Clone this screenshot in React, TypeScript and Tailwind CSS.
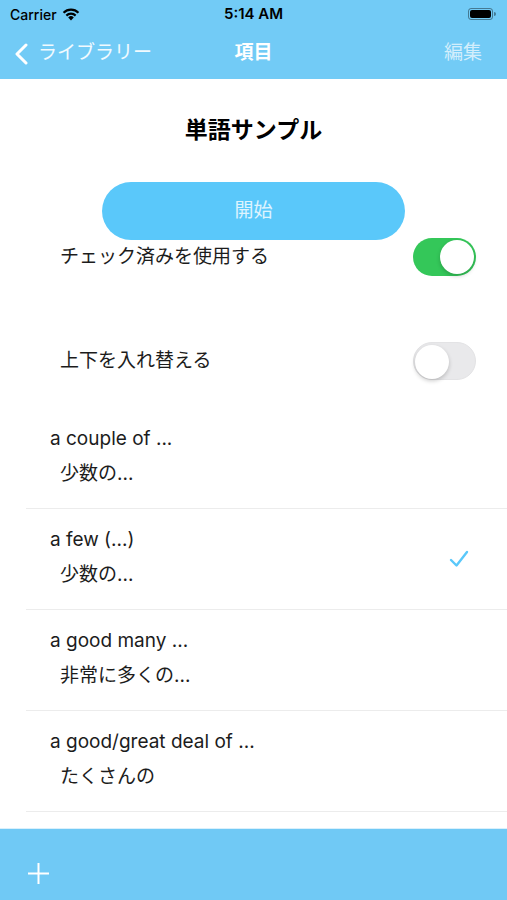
import React from 'react';

type Word = { en: string; ja: string; checked?: boolean };

const words: Word[] = [
  { en: 'a couple of ...', ja: '少数の...' },
  { en: 'a few (...)', ja: '少数の...', checked: true },
  { en: 'a good many ...', ja: '非常に多くの...' },
  { en: 'a good/great deal of ...', ja: 'たくさんの' },
];

const font = { fontFamily: 'Inter, "Noto Sans CJK JP", sans-serif' };

const Toggle: React.FC<{ on: boolean }> = ({ on }) => (
  <div
    className={`relative h-[38px] w-[63px] rounded-full ${
      on ? 'bg-[#34c759]' : 'border border-[#e3e3e5] bg-[#e9e9eb]'
    }`}
  >
    <div
      className={`absolute top-[2px] h-[34px] w-[34px] rounded-full bg-white shadow-[0_2px_4px_rgba(0,0,0,0.2)] ${
        on ? 'right-[2px]' : 'left-[1px] top-[1px]'
      }`}
    />
  </div>
);

const StatusBar: React.FC = () => (
  <div className="flex h-[28px] items-center justify-between px-[10px] text-black">
    <div className="flex w-[120px] items-center gap-[5px]">
      <span className="text-[14px] font-medium">Carrier</span>
      <svg width="18" height="13" viewBox="0 0 18 13">
        <path d="M9 12.5 L6.2 9.4 A4 4 0 0 1 11.8 9.4 Z" fill="#000" />
        <path d="M3.6 6.8 A7.6 7.6 0 0 1 14.4 6.8 L12.9 8.4 A5.5 5.5 0 0 0 5.1 8.4 Z" fill="#000" />
        <path d="M0.8 4 A11.6 11.6 0 0 1 17.2 4 L15.7 5.6 A9.5 9.5 0 0 0 2.3 5.6 Z" fill="#000" />
      </svg>
    </div>
    <span className="text-[15px] font-semibold">5:14 AM</span>
    <div className="flex w-[120px] justify-end pr-[1px]">
      <div className="flex items-center">
        <div className="flex h-[12px] w-[25px] items-center rounded-[3px] border border-black/40 p-[1px]">
          <div className="h-full w-full rounded-[2px] bg-black" />
        </div>
        <div className="ml-[1px] h-[4px] w-[1.5px] rounded-r-sm bg-black/40" />
      </div>
    </div>
  </div>
);

const NavBar: React.FC = () => (
  <div className="relative flex h-[51px] items-center justify-between pl-[14px] pr-[25px]">
    <div className="flex items-center gap-[8px] text-white/90">
      <svg width="16" height="22" viewBox="0 0 16 22">
        <path d="M12 2 L3 11 L12 20" fill="none" stroke="#fff" strokeWidth="3" strokeLinecap="round" strokeLinejoin="round" />
      </svg>
      <span className="text-[19px]">ライブラリー</span>
    </div>
    <span className="absolute left-1/2 -translate-x-1/2 text-[19px] font-bold text-white">項目</span>
    <span className="text-[19px] text-white/70">編集</span>
  </div>
);

export default function App() {
  return (
    <div className="flex h-[900px] w-[507px] flex-col overflow-hidden bg-white" style={font}>
      <div className="bg-[#72cbf6]">
        <StatusBar />
        <NavBar />
      </div>

      <div className="flex flex-1 flex-col">
        <h1 className="mt-[36px] text-center text-[23px] leading-[30px] font-bold text-black">単語サンプル</h1>

        <div className="mt-[37px] flex justify-center">
          <button
            type="button"
            className="h-[58px] w-[303px] rounded-full bg-[#5ac8fa] text-[19px] text-white/80"
          >
            開始
          </button>
        </div>

        <div className="-mt-[3px] flex h-[40px] items-center justify-between pl-[60px] pr-[31px]">
          <span className="text-[19px] text-[#1c1c1c]">チェック済みを使用する</span>
          <Toggle on />
        </div>

        <div className="mt-[64px] flex h-[40px] items-center justify-between pl-[60px] pr-[31px]">
          <span className="text-[19px] text-[#1c1c1c]">上下を入れ替える</span>
          <Toggle on={false} />
        </div>

        <ul className="mt-[27px]">
          {words.map((w) => (
            <li key={w.en} className="ml-[26px] flex h-[101px] items-center justify-between border-b border-[#ececec] pr-[38px]">
              <div className="flex flex-col pl-[24px] pb-[4px] text-[19px] text-[#1c1c1c]">
                <span className="leading-[28px]">{w.en}</span>
                <span className="mt-[7px] pl-[10px] leading-[28px]">{w.ja}</span>
              </div>
              {w.checked && (
                <svg width="20" height="18" viewBox="0 0 20 18">
                  <path d="M2 10 L7.5 15.5 L18 2" fill="none" stroke="#5ac8fa" strokeWidth="2.4" strokeLinecap="round" strokeLinejoin="round" />
                </svg>
              )}
            </li>
          ))}
        </ul>
      </div>

      <div className="h-[72px] border-t border-[#d9f0fc] bg-[#70c9f5] pl-[27px] pt-[33px]">
        <svg width="23" height="23" viewBox="0 0 23 23">
          <path d="M11.5 1 V22 M1 11.5 H22" stroke="#fff" strokeWidth="2" />
        </svg>
      </div>
    </div>
  );
}
